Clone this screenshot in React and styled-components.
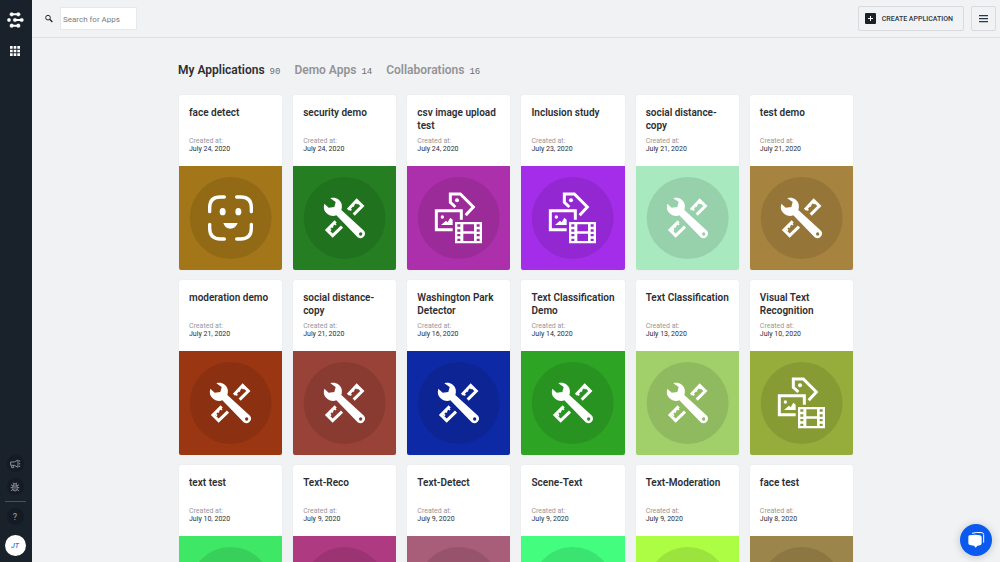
import React from "react";
import styled, { createGlobalStyle } from "styled-components";

const GlobalStyle = createGlobalStyle`
  *, *::before, *::after { box-sizing: border-box; }
  html, body { height: 100%; }
  body {
    margin: 0;
    overflow: hidden;
    background: #f1f2f4;
    color: #2d2e33;
    font-family: Roboto, "Liberation Sans", sans-serif;
  }
  button, input { font-family: inherit; }
  h2, p, dl, dd { margin: 0; }
  svg { display: block; }
`;

const Shell = styled.div`
  display: flex;
  height: 100vh;
`;

const Sidebar = styled.nav`
  flex: 0 0 32px;
  display: flex;
  flex-direction: column;
  align-items: center;
  justify-content: space-between;
  padding: 12px 2px 6px 0;
  background: #19212b;
`;

const SideGroup = styled.div`
  display: flex;
  flex-direction: column;
  align-items: center;
  gap: ${(p) => p.$gap}px;
`;

const SideLink = styled.a`
  display: block;
`;

const RoundButton = styled.button`
  display: grid;
  place-items: center;
  width: 17px;
  height: 17px;
  padding: 0;
  border: 0;
  border-radius: 50%;
  background: #141b24;
  color: #8b9097;
  font-size: 9px;
  font-weight: 500;
`;

const Divider = styled.hr`
  width: 21px;
  height: 1px;
  margin: 0;
  border: 0;
  background: #484f58;
`;

const Avatar = styled.button`
  width: 21px;
  height: 21px;
  margin-top: 4px;
  padding: 0;
  border: 0;
  border-radius: 50%;
  background: #fff;
  color: #3b74f0;
  font-size: 7px;
  font-style: italic;
  font-weight: 500;
`;

const Page = styled.div`
  flex: 1;
  min-width: 0;
  display: flex;
  flex-direction: column;
`;

const Header = styled.header`
  flex: none;
  display: flex;
  align-items: center;
  justify-content: space-between;
  height: 38px;
  padding: 0 4px 0 12px;
  border-bottom: 1px solid #dddfe2;
`;

const Search = styled.label`
  display: flex;
  align-items: center;
  gap: 6px;
`;

const SearchInput = styled.input`
  width: 77px;
  height: 23px;
  padding: 2px 2px 0;
  border: 1px solid #e6e8ea;
  background: #fff;
  color: #2d2e33;
  font-size: 8px;
  &::placeholder { color: #7b7c80; opacity: 1; }
`;

const Actions = styled.div`
  display: flex;
  gap: 7px;
`;

const HeaderButton = styled.button`
  display: flex;
  align-items: center;
  justify-content: center;
  gap: 6px;
  height: 25px;
  min-width: 25px;
  padding: 0 ${(p) => (p.$wide ? 10 : 0)}px 0 ${(p) => (p.$wide ? 6 : 0)}px;
  border: 1px solid #d8dadd;
  border-radius: 2px;
  background: transparent;
  color: #2b3648;
  font-size: 7px;
  font-weight: 500;
`;

const Main = styled.main`
  flex: 1;
  min-height: 0;
  overflow: hidden;
  padding: 23px 24px 0;
`;

const Content = styled.div`
  max-width: 674px;
  margin: 0 auto;
`;

const Tabs = styled.div`
  display: flex;
  gap: 14px;
  height: 34px;
  margin-left: -1px;
`;

const Tab = styled.button`
  display: flex;
  align-items: baseline;
  gap: 5px;
  height: 18px;
  padding: 0;
  border: 0;
  background: none;
  color: ${(p) => (p.$active ? "#2d2e33" : "#939497")};
  font-size: 12px;
  font-weight: 600;
  line-height: 18px;
  white-space: nowrap;
`;

const Count = styled.span`
  color: #6d6e72;
  font-family: "Liberation Mono", monospace;
  font-size: 9px;
  font-weight: 400;
`;

const Grid = styled.div`
  display: grid;
  grid-template-columns: repeat(6, minmax(0, 1fr));
  gap: 10px 11px;
`;

const Card = styled.a`
  display: flex;
  flex-direction: column;
  overflow: hidden;
  border-radius: 2px;
  background: #fff;
  color: inherit;
  text-decoration: none;
  box-shadow: 0 0 1px rgba(0, 0, 0, 0.12);
`;

const CardInfo = styled.div`
  height: 71px;
  padding: 11px 10px 0;
`;

const CardTitle = styled.h2`
  height: 31px;
  font-size: 10px;
  font-weight: 600;
  line-height: 13px;
`;

const Created = styled.dl`
  font-size: 7px;
  line-height: 8px;
`;

const CreatedLabel = styled.dt`
  color: #97989b;
`;

const Cover = styled.div`
  display: grid;
  place-items: center;
  height: 104px;
  background: ${(p) => p.$color};
`;

const Chat = styled.button`
  position: fixed;
  right: 8px;
  bottom: 6px;
  display: grid;
  place-items: center;
  width: 32px;
  height: 32px;
  padding: 0;
  border: 0;
  border-radius: 50%;
  background: #0a5af0;
  box-shadow: 0 1px 8px rgba(0, 0, 0, 0.2);
`;

const ToolsArt = () => (
  <>
    <g fill="none" stroke="#fff" strokeWidth="9">
      <path d="M165 131 191 103 208 120 182 146" />
      <path d="M128 166 102 192 119 209 147 182" />
      <path d="M169 127l6 6M179 117l4 4M188 108l6 6" strokeWidth="5" />
      <path d="M123 171l6 6M115 179l5 5M107 187l7 7" strokeWidth="5" />
    </g>
    <path
      fill="#fff"
      fillRule="evenodd"
      d="M112 97C127 92 142 101 146 115C147 121 147 127 145 132L213 194A14 14 0 0 1 194 214L130 148C120 152 108 149 100 141C92 133 91 123 94 113L107 125L124 123L128 108ZM203 199a5 5 0 1 0 0 10a5 5 0 1 0 0-10Z"
    />
  </>
);

const FaceArt = () => (
  <>
    <g fill="none" stroke="#fff" strokeWidth="10" strokeLinecap="round">
      <path d="M92 137V125Q92 93 124 93H136" />
      <path d="M173 93H185Q217 93 217 125V137" />
      <path d="M217 175V187Q217 219 185 219H173" />
      <path d="M136 219H124Q92 219 92 187V175" />
    </g>
    <g fill="#fff">
      <ellipse cx="131" cy="137" rx="9" ry="11" />
      <ellipse cx="178" cy="137" rx="9" ry="11" />
      <path d="M133 171H176Q170 188 154 188T133 171Z" />
    </g>
  </>
);

const MediaArt = () => (
  <>
    <g fill="none" stroke="#fff" strokeWidth="9">
      <path d="M145 123 130 109V84H160L199 123 176 148" />
      <path d="M163 161V134H88V191H137" />
    </g>
    <g fill="#fff">
      <circle cx="150" cy="103" r="6" />
      <circle cx="106" cy="153" r="5" />
      <path d="M102 177 117 164 122 169 130 155 137 161V177Z" />
      <path
        fillRule="evenodd"
        d="M144 168H225V232H144ZM169 175V196H201V175ZM169 203V225H201V203ZM151 175v7h9v-7ZM151 190v7h9v-7ZM151 204v7h9v-7ZM151 218v7h9v-7ZM209 175v7h9v-7ZM209 190v7h9v-7ZM209 204v7h9v-7ZM209 218v7h9v-7Z"
      />
    </g>
  </>
);

const ART = { tools: ToolsArt, face: FaceArt, media: MediaArt };

const CoverArt = ({ kind }) => {
  const Art = ART[kind];
  return (
    <svg width="104" height="104" viewBox="0 0 312 312" aria-hidden="true">
      <circle cx="155" cy="156" r="123" fill="#000" fillOpacity="0.1" />
      <Art />
    </svg>
  );
};

const LogoIcon = () => (
  <svg width="17" height="16" viewBox="0 0 51 48" fill="#fff" stroke="#fff" aria-hidden="true">
    <path d="M14 7H34M24 24H43M14 41H34" strokeWidth="6" />
    <circle cx="14" cy="7" r="5.5" />
    <circle cx="34" cy="7" r="5.5" />
    <circle cx="6" cy="24" r="5" />
    <circle cx="24" cy="24" r="5.5" />
    <circle cx="44" cy="24" r="5.5" />
    <circle cx="14" cy="41" r="5.5" />
    <circle cx="34" cy="41" r="5.5" />
  </svg>
);

const GridIcon = () => (
  <svg width="10" height="10" viewBox="0 0 30 30" fill="#fff" aria-hidden="true">
    <path d="M0 0h8v8H0zM11 0h8v8h-8zM22 0h8v8h-8zM0 11h8v8H0zM11 11h8v8h-8zM22 11h8v8h-8zM0 22h8v8H0zM11 22h8v8h-8zM22 22h8v8h-8z" />
  </svg>
);

const HornIcon = () => (
  <svg width="11" height="10" viewBox="0 0 33 30" fill="none" stroke="currentColor" strokeWidth="3" aria-hidden="true">
    <path d="M2 9H13L24 3V25L13 19H2ZM5 19V26H11V19M29 4V8M29 12V16M29 20V24" />
  </svg>
);

const BugIcon = () => (
  <svg width="10" height="10" viewBox="0 0 30 30" fill="none" stroke="currentColor" strokeWidth="3" aria-hidden="true">
    <path d="M9 12H21V20Q21 27 15 27T9 20ZM10 11Q10 5 15 5T20 11M10 2 12 6M20 2 18 6M2 17H9M21 17H28M3 8 9 12M27 8 21 12M3 27 9 22M27 27 21 22M13 17H17M13 21H17" />
  </svg>
);

const SearchIcon = () => (
  <svg width="10" height="10" viewBox="0 0 30 30" fill="none" stroke="#27292e" aria-hidden="true">
    <circle cx="12" cy="11" r="7" strokeWidth="3" />
    <path d="M17 16 25 24" strokeWidth="4" />
  </svg>
);

const PlusIcon = () => (
  <svg width="11" height="11" viewBox="0 0 33 33" aria-hidden="true">
    <rect width="33" height="33" rx="3" fill="#19212b" />
    <path d="M16.500 9V24M9 16.500H24" stroke="#fff" strokeWidth="3" />
  </svg>
);

const MenuIcon = () => (
  <svg width="9" height="9" viewBox="0 0 27 27" stroke="#2b3648" strokeWidth="4" aria-hidden="true">
    <path d="M0 5H27M0 14H27M0 23H27" />
  </svg>
);

const ChatIcon = () => (
  <svg width="18" height="18" viewBox="0 0 54 54" fill="#fff" aria-hidden="true">
    <path d="M15 7Q26 3 45 5Q50 6 50 11V35" fill="none" stroke="#fff" strokeWidth="3" />
    <path d="M7 13Q24 9 39 13Q44 14 44 19V37Q44 42 39 43L31 44 26 50 21 44 8 42Q4 41 4 36V18Q4 14 7 13Z" />
  </svg>
);

const tabs = [
  { name: "My Applications", count: 90 },
  { name: "Demo Apps", count: 14 },
  { name: "Collaborations", count: 16 },
];

const apps = [
  { title: "face detect", date: "July 24, 2020", color: "#a37719", kind: "face" },
  { title: "security demo", date: "July 24, 2020", color: "#257f22", kind: "tools" },
  { title: "csv image upload test", date: "July 24, 2020", color: "#ac30ab", kind: "media" },
  { title: "Inclusion study", date: "July 23, 2020", color: "#a42dea", kind: "media" },
  { title: "social distance-copy", date: "July 21, 2020", color: "#a9e9bf", kind: "tools" },
  { title: "test demo", date: "July 21, 2020", color: "#a6843f", kind: "tools" },
  { title: "moderation demo", date: "July 21, 2020", color: "#9b3612", kind: "tools" },
  { title: "social distance-copy", date: "July 21, 2020", color: "#994237", kind: "tools" },
  { title: "Washington Park Detector", date: "July 16, 2020", color: "#0e29a5", kind: "tools" },
  { title: "Text Classification Demo", date: "July 14, 2020", color: "#2da424", kind: "tools" },
  { title: "Text Classification", date: "July 13, 2020", color: "#a1d06a", kind: "tools" },
  { title: "Visual Text Recognition", date: "July 10, 2020", color: "#97ad3b", kind: "media" },
  { title: "text test", date: "July 10, 2020", color: "#3fe766", kind: "tools" },
  { title: "Text-Reco", date: "July 9, 2020", color: "#ae3a82", kind: "tools" },
  { title: "Text-Detect", date: "July 9, 2020", color: "#a85d78", kind: "tools" },
  { title: "Scene-Text", date: "July 9, 2020", color: "#42fd7e", kind: "tools" },
  { title: "Text-Moderation", date: "July 9, 2020", color: "#adfd44", kind: "tools" },
  { title: "face test", date: "July 8, 2020", color: "#9c854a", kind: "tools" },
];

export default function App() {
  return (
    <>
      <GlobalStyle />
      <Shell>
        <Sidebar>
          <SideGroup $gap={18}>
            <SideLink href="#home" aria-label="Home"><LogoIcon /></SideLink>
            <SideLink href="#apps" aria-label="Applications"><GridIcon /></SideLink>
          </SideGroup>
          <SideGroup $gap={6}>
            <RoundButton aria-label="Announcements"><HornIcon /></RoundButton>
            <RoundButton aria-label="Report a bug"><BugIcon /></RoundButton>
            <Divider />
            <RoundButton>?</RoundButton>
            <Avatar>JT</Avatar>
          </SideGroup>
        </Sidebar>
        <Page>
          <Header>
            <Search aria-label="Search for Apps">
              <SearchIcon />
              <SearchInput type="text" placeholder="Search for Apps" aria-label="Search for Apps" />
            </Search>
            <Actions>
              <HeaderButton $wide><PlusIcon />CREATE APPLICATION</HeaderButton>
              <HeaderButton aria-label="Menu"><MenuIcon /></HeaderButton>
            </Actions>
          </Header>
          <Main>
            <Content>
              <Tabs role="tablist">
                {tabs.map((t, i) => (
                  <Tab key={t.name} role="tab" aria-selected={i === 0} $active={i === 0}>
                    {t.name}
                    <Count>{t.count}</Count>
                  </Tab>
                ))}
              </Tabs>
              <Grid>
                {apps.map((a, i) => (
                  <Card key={i} href={`#app-${i + 1}`}>
                    <CardInfo>
                      <CardTitle>{a.title}</CardTitle>
                      <Created>
                        <CreatedLabel>Created at:</CreatedLabel>
                        <dd>{a.date}</dd>
                      </Created>
                    </CardInfo>
                    <Cover $color={a.color}><CoverArt kind={a.kind} /></Cover>
                  </Card>
                ))}
              </Grid>
            </Content>
          </Main>
        </Page>
      </Shell>
      <Chat aria-label="Open chat"><ChatIcon /></Chat>
    </>
  );
}
